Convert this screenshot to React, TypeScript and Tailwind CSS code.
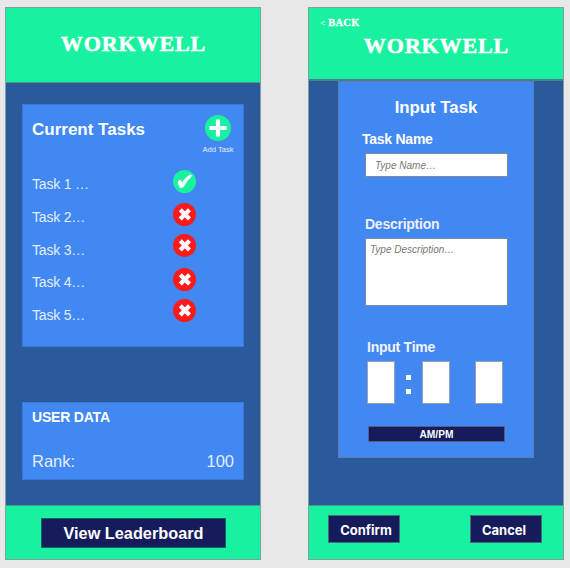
import React from "react";

const sans = "font-['Liberation_Sans',Arial,sans-serif]";

function Logo() {
  return (
    <div className="h-6 whitespace-nowrap pl-px font-['Liberation_Serif',serif] text-[22px] leading-6 font-bold tracking-[0.9px] text-white [-webkit-text-stroke:0.5px_white]">
      WORKWELL
    </div>
  );
}

function Check() {
  return (
    <svg viewBox="0 0 24 24" className="block size-[23px]">
      <circle cx="12" cy="12" r="12" fill="#18f2a0" />
      <path d="M5.2 13 Q5.6 10.6 7.8 10.6 Q8.8 11.2 9.5 13.2 Q13.2 7.4 17.6 5.2 L20 5.6 Q14.5 11 11 17.4 Q9 19 7.2 18.2 Q6 15.5 5.2 13 Z" fill="#fff" stroke="#fff" strokeWidth="0.6" />
    </svg>
  );
}

function Cross() {
  return (
    <svg viewBox="0 0 24 24" className="block size-[23px]">
      <circle cx="12" cy="12" r="12" fill="#ff1a1a" />
      <path d="M7.6 7 L17.2 16.6 M17.2 7 L7.6 16.6" stroke="#fff" strokeWidth="4.5" />
    </svg>
  );
}

const tasks = ["Task 1 …", "Task 2…", "Task 3…", "Task 4…", "Task 5…"];

function TaskScreen() {
  return (
    <section className="flex h-[553px] w-[256px] flex-col border border-[#7f9fa0] bg-[#2a599c]">
      <header className="flex h-[75px] shrink-0 justify-center border-b border-[#4d9c86] bg-[#18f2a0] pt-[24px]">
        <Logo />
      </header>
      <div className="flex grow flex-col px-4">
        <div className="mt-[21px] h-[243px] w-[222px] border border-[#3b79d8] bg-[#4188f3] pr-[9px] pl-[9px]">
          <div className="flex h-[60px] justify-between">
            <h1 className="mt-[15px] text-[17px] leading-5 font-bold">Current Tasks</h1>
            <div className="-mr-px flex w-[34px] flex-col items-center pt-[10px]">
              <svg viewBox="0 0 26 26" className="block size-[26px] shrink-0">
                <circle cx="13" cy="13" r="13" fill="#18f2a0" />
                <path d="M13 4.5V21.5M4.5 13H21.5" stroke="#fff" strokeWidth="4.2" />
              </svg>
              <span className="mt-[4px] text-[7.6px] leading-[10px] whitespace-nowrap text-[#e3edfd]">Add Task</span>
            </div>
          </div>
          <div className="flex">
            <div className="flex w-[141px] flex-col pt-[3.4px]">
              {tasks.map((task) => (
                <div key={task} className="h-[32.7px] text-[14px] leading-[33px] tracking-[-0.2px] text-[#e3edfd]">{task}</div>
              ))}
            </div>
            <div className="flex flex-col pt-[4.5px]">
              <div className="h-[33px]"><Check /></div>
              <div className="h-[31.5px]"><Cross /></div>
              <div className="h-[33.5px]"><Cross /></div>
              <div className="h-[31px]"><Cross /></div>
              <Cross />
            </div>
          </div>
        </div>
        <div className="mt-[55px] flex h-[78px] w-[222px] flex-col justify-between border border-[#3b79d8] bg-[#4188f3] px-[9px] pt-[4px] pb-[6px]">
          <h2 className="text-[14px] leading-5 font-bold tracking-[-0.2px]">USER DATA</h2>
          <div className="flex justify-between text-[16.5px] leading-6 text-[#e3edfd]">
            <span>Rank:</span>
            <span>100</span>
          </div>
        </div>
      </div>
      <footer className="flex h-[54px] shrink-0 justify-center border-t border-[#4d9c86] bg-[#18f2a0] pt-3">
        <button className="h-[30px] w-[185px] border border-[#12645f] bg-[#161b5c] pl-px text-[16.3px] leading-[28px] font-bold">
          View Leaderboard
        </button>
      </footer>
    </section>
  );
}

function TimeBox() {
  return <div className="h-[43px] w-7 shrink-0 border border-[#9aa2b0] bg-white" />;
}

function InputScreen() {
  return (
    <section className="flex h-[553px] w-[256px] flex-col border border-[#7f9fa0] bg-[#2a599c]">
      <header className="h-[73px] shrink-0 border-b-2 border-[#4b7f8c] bg-[#18f2a0] pt-[8px]">
        <div className="flex h-[14px] items-center gap-[3px] pl-[11px] font-['Liberation_Serif',serif] leading-[14px] font-bold">
          <span className="text-[9px]">&lt;</span>
          <span className="text-[10.4px] tracking-[0.4px] [-webkit-text-stroke:0.3px_white]">BACK</span>
        </div>
        <div className="mt-1 flex justify-center">
          <Logo />
        </div>
      </header>
      <div className="grow pl-[29px]">
        <div className="flex h-[377px] w-[196px] flex-col border border-[#5b7fae] bg-[#4188f3]">
          <h1 className="mt-[16px] h-5 text-center text-[16.8px] leading-5 font-bold">Input Task</h1>
          <div className="flex flex-col pt-[13px] pl-[23px]">
            <label className="h-4 text-[14px] leading-4 font-bold tracking-[-0.25px]">Task Name</label>
            <div className="mt-[6px] ml-[3px] h-6 w-[143px] border border-[#7f8b9d] bg-white pl-[9px] text-[10px] leading-[23px] text-[#777] italic">
              Type Name…
            </div>
          </div>
          <div className="mt-[39px] flex flex-col pl-[26px]">
            <label className="h-4 text-[14px] leading-4 font-bold tracking-[-0.25px] text-[#f0eefa]">Description</label>
            <div className="mt-[6px] h-[68px] w-[143px] border border-[#7f8b9d] bg-white pt-[5px] pl-[4px] text-[10px] leading-3 text-[#777] italic">
              Type Description…
            </div>
          </div>
          <div className="mt-[33px] flex flex-col pl-[28px]">
            <label className="h-4 text-[14px] leading-4 font-bold tracking-[-0.25px] text-[#f0f4fe]">Input Time</label>
            <div className="mt-[6px] flex">
              <TimeBox />
              <div className="flex w-[27px] flex-col items-center gap-[9px] pt-[14px]">
                <span className="size-[5px] bg-white" />
                <span className="size-[5px] bg-white" />
              </div>
              <TimeBox />
              <div className="w-[25px]" />
              <TimeBox />
            </div>
            <button className="mt-[22px] ml-px h-4 w-[137px] border border-[#555c85] bg-[#161b5c] text-[10.2px] leading-[15px] font-bold">
              AM/PM
            </button>
          </div>
        </div>
      </div>
      <footer className="flex h-[54px] shrink-0 justify-between border-t border-[#4d9c86] bg-[#18f2a0] pt-[9px] pr-[21px] pl-[19px]">
        <button className="h-7 w-[72px] border border-[#4a6b73] bg-[#161b5c] pl-1 font-['Inter',sans-serif] text-[13px] leading-[28px] font-bold">
          Confirm
        </button>
        <button className="h-7 w-[72px] border border-[#4a6b73] bg-[#161b5c] pr-1 font-['Inter',sans-serif] text-[13px] leading-[28px] font-bold">
          Cancel
        </button>
      </footer>
    </section>
  );
}

export default function App() {
  return (
    <main className={`flex h-[568px] w-[570px] gap-[47px] overflow-hidden bg-[#e8e8e8] pt-[7px] pl-[5px] text-white ${sans}`}>
      <TaskScreen />
      <InputScreen />
    </main>
  );
}
